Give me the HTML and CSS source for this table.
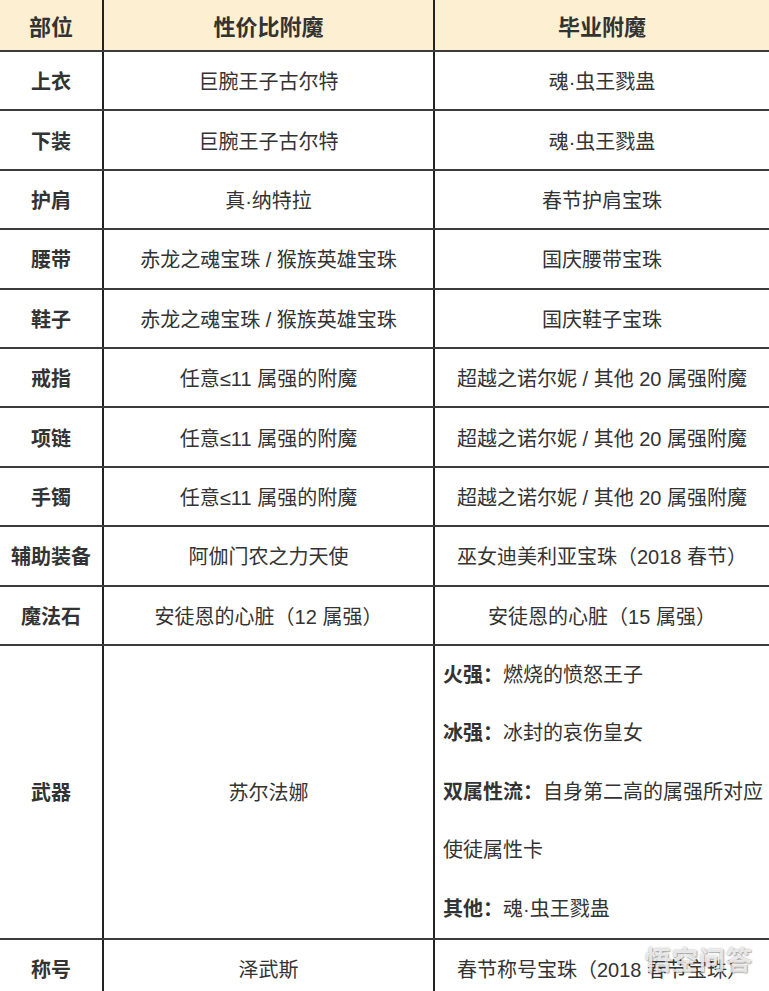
FILE: index.html
```html
<!DOCTYPE html>
<html lang="zh-CN">
<head>
<meta charset="utf-8">
<title>附魔推荐</title>
<link rel="stylesheet" href="styles.css">
</head>
<body>
<table class="enchant">
  <colgroup>
    <col class="c-slot">
    <col class="c-budget">
    <col class="c-final">
  </colgroup>
  <thead>
    <tr>
      <th>部位</th>
      <th>性价比附魔</th>
      <th>毕业附魔</th>
    </tr>
  </thead>
  <tbody>
    <tr><td class="slot">上衣</td><td>巨腕王子古尔特</td><td>魂·虫王戮蛊</td></tr>
    <tr><td class="slot">下装</td><td>巨腕王子古尔特</td><td>魂·虫王戮蛊</td></tr>
    <tr><td class="slot">护肩</td><td>真·纳特拉</td><td>春节护肩宝珠</td></tr>
    <tr><td class="slot">腰带</td><td>赤龙之魂宝珠 / 猴族英雄宝珠</td><td>国庆腰带宝珠</td></tr>
    <tr><td class="slot">鞋子</td><td>赤龙之魂宝珠 / 猴族英雄宝珠</td><td>国庆鞋子宝珠</td></tr>
    <tr><td class="slot">戒指</td><td>任意≤11 属强的附魔</td><td>超越之诺尔妮 / 其他 20 属强附魔</td></tr>
    <tr><td class="slot">项链</td><td>任意≤11 属强的附魔</td><td>超越之诺尔妮 / 其他 20 属强附魔</td></tr>
    <tr><td class="slot">手镯</td><td>任意≤11 属强的附魔</td><td>超越之诺尔妮 / 其他 20 属强附魔</td></tr>
    <tr><td class="slot">辅助装备</td><td>阿伽门农之力天使</td><td>巫女迪美利亚宝珠（2018 春节）</td></tr>
    <tr><td class="slot">魔法石</td><td>安徒恩的心脏（12 属强）</td><td>安徒恩的心脏（15 属强）</td></tr>
    <tr class="weapon">
      <td class="slot">武器</td>
      <td>苏尔法娜</td>
      <td class="list">
        <p><b>火强：</b>燃烧的愤怒王子</p>
        <p><b>冰强：</b>冰封的哀伤皇女</p>
        <p><b>双属性流：</b>自身第二高的属强所对应使徒属性卡</p>
        <p><b>其他：</b>魂·虫王戮蛊</p>
      </td>
    </tr>
    <tr><td class="slot">称号</td><td>泽武斯</td><td>春节称号宝珠（2018 春节宝珠）</td></tr>
  </tbody>
</table>
<div class="watermark">悟空问答</div>
</body>
</html>
```

FILE: styles.css
```css
html, body {
  margin: 0;
  padding: 0;
  background: #ffffff;
  overflow: hidden;
}

body {
  font-family: "Liberation Sans", "Noto Sans CJK SC", sans-serif;
  color: #333333;
  width: 769px;
  height: 991px;
  position: relative;
}

.enchant {
  width: 769px;
  border-collapse: collapse;
  table-layout: fixed;
}

.c-slot { width: 103px; }
.c-budget { width: 331px; }
.c-final { width: 335px; }

.enchant th,
.enchant td {
  border-bottom: 2px solid #3c3c3c;
  border-left: 2px solid #222222;
  text-align: center;
  vertical-align: middle;
  padding: 0;
}

.enchant th:first-child,
.enchant td:first-child {
  border-left: none;
}

.enchant th {
  background: #fdf0d2;
  height: 50px;
  font-size: 22px;
  font-weight: 700;
  color: #333333;
}

.enchant td {
  height: 57.4px;
  font-size: 20px;
  font-weight: 400;
}

.enchant td.slot {
  font-weight: 700;
  font-size: 20px;
}

.enchant td.list {
  text-align: left;
  padding: 0 2px 0 8px;
}

.list p {
  margin: 0;
  line-height: 58.4px;
}

.list b {
  font-weight: 700;
}

.watermark {
  position: absolute;
  right: 16px;
  bottom: 14px;
  font-family: "Noto Sans CJK SC", sans-serif;
  font-size: 26px;
  font-weight: 700;
  letter-spacing: 1px;
  color: rgba(255, 255, 255, 0.8);
  text-shadow: 0 0 2px rgba(60, 60, 60, 0.5), 1px 1px 1px rgba(60, 60, 60, 0.3);
}
```
